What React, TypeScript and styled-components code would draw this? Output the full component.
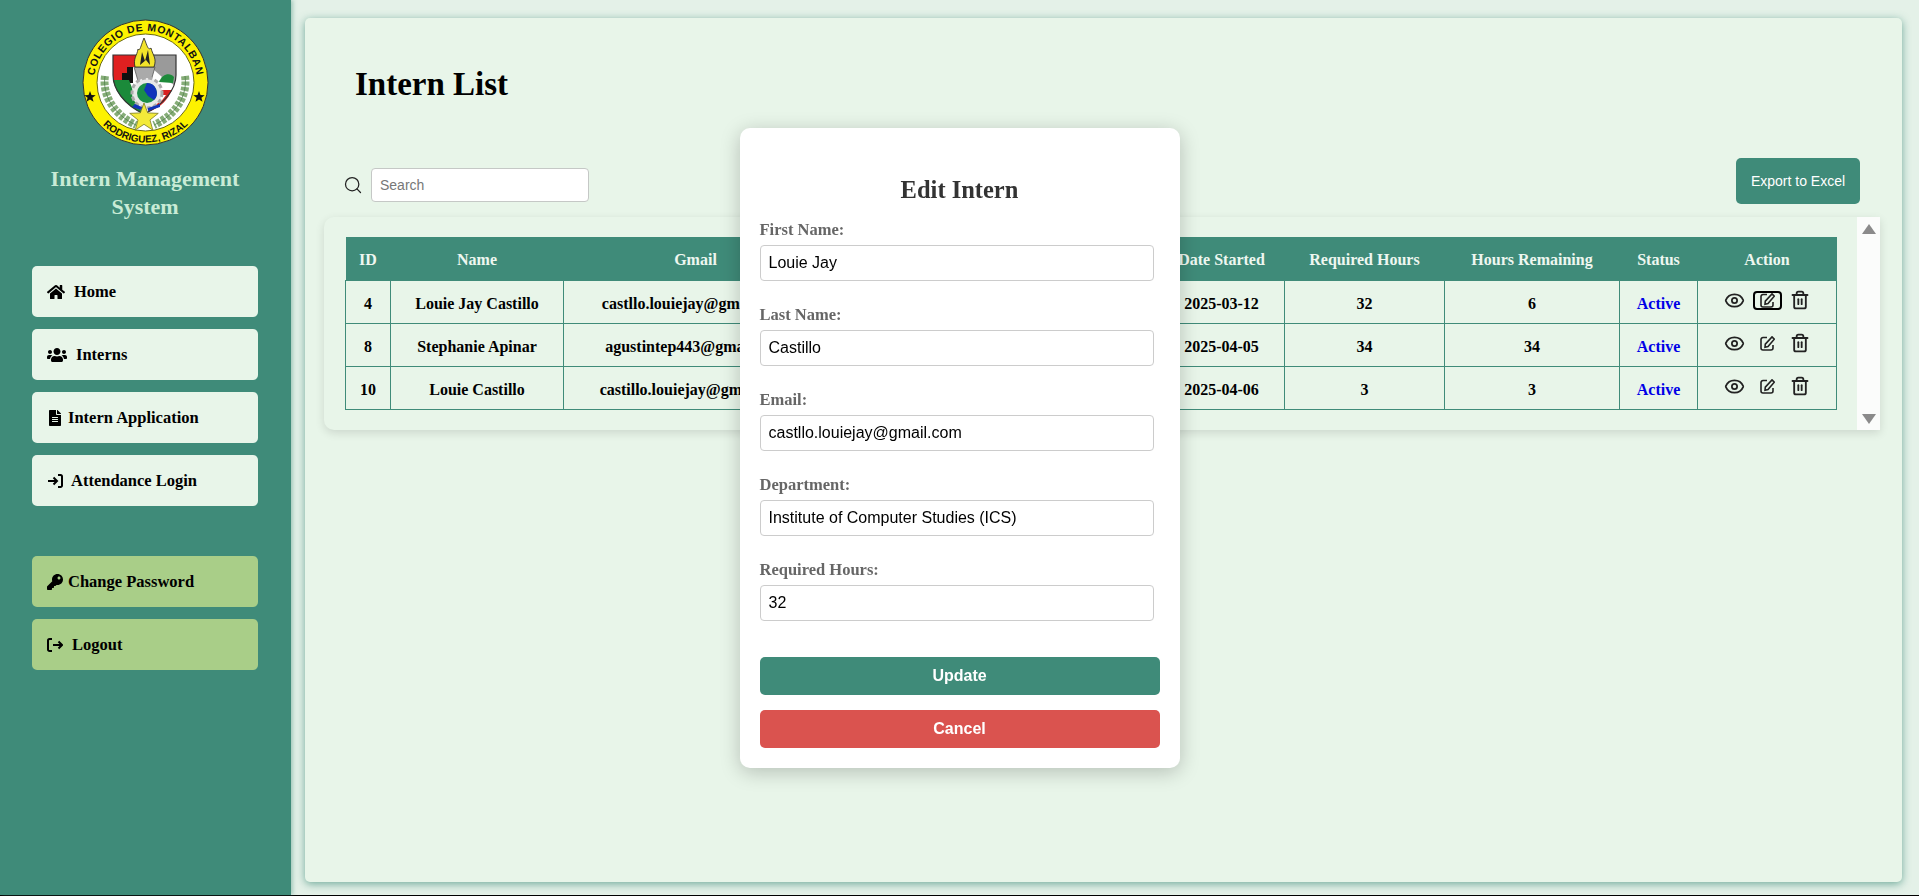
import React from "react";
import styled, { createGlobalStyle } from "styled-components";
import { FaHome, FaUsers, FaFileAlt, FaKey } from "react-icons/fa";
import { LuSearch, LuEye, LuTrash2 } from "react-icons/lu";

const GlobalStyle = createGlobalStyle`
  * {
    box-sizing: border-box;
  }
  html,
  body {
    margin: 0;
    height: 100%;
    overflow: hidden;
  }
  body {
    background: #e4f1e8;
    font-family: "Liberation Serif", serif;
  }
`;

const Layout = styled.div`
  display: flex;
  height: 896px;
  border-bottom: 1px solid #000;
`;

// 왼쪽 메뉴
const Sidebar = styled.aside`
  width: 291px;
  flex-shrink: 0;
  background: #3f8b79;
  box-shadow: 2px 0 4px rgba(63, 139, 121, 0.4);
  padding: 19px 33px 0 32px;
  display: flex;
  flex-direction: column;
`;

const LogoWrap = styled.div`
  display: flex;
  justify-content: center;
  height: 127px;
`;

const AppTitle = styled.h2`
  margin: 19px 10px 0;
  text-align: center;
  color: #c9ebd6;
  font-size: 22px;
  font-weight: 700;
  line-height: 28px;
`;

const Nav = styled.nav`
  margin-top: 45px;
  display: flex;
  flex-direction: column;
  gap: 12px;
`;

const BottomNav = styled(Nav)`
  margin-top: 50px;
`;

const NavButton = styled.button<{ $gap: number; $accent?: boolean }>`
  height: 51px;
  border: none;
  border-radius: 5px;
  padding: 0 15px;
  display: flex;
  align-items: center;
  gap: ${(p) => p.$gap}px;
  background: ${(p) => (p.$accent ? "#a9ce88" : "#e8f5e9")};
  color: #000;
  font-family: "Liberation Serif", serif;
  font-size: 16.5px;
  font-weight: 700;
  svg {
    flex-shrink: 0;
  }
`;

const Main = styled.main`
  flex: 1;
  min-width: 0;
  padding: 18px 17px 13px 14px;
  display: flex;
`;

const Panel = styled.section`
  flex: 1;
  min-width: 0;
  background: #e8f5e9;
  border-radius: 5px;
  box-shadow: 0 2px 8px rgba(63, 139, 121, 0.7);
  padding: 41px 22px 0 19px;
`;

const PageTitle = styled.h1`
  margin: 0 0 0 31px;
  color: #000;
  font-size: 33px;
  font-weight: 700;
  line-height: 50px;
`;

const Toolbar = styled.div`
  margin-top: 49px;
  height: 46px;
  padding: 0 20px 0 19px;
  display: flex;
  justify-content: space-between;
`;

const SearchBox = styled.div`
  display: flex;
  align-items: center;
  gap: 8px;
  padding-top: 7px;
  color: #222;
`;

const SearchInput = styled.input`
  width: 218px;
  height: 34px;
  padding: 0 8px;
  border: 1px solid #c5c8c6;
  border-radius: 4px;
  background: #fff;
  font-family: "Liberation Sans", sans-serif;
  font-size: 14px;
  &::placeholder {
    color: #777;
  }
`;

const ExportButton = styled.button`
  width: 124px;
  height: 46px;
  border: none;
  border-radius: 5px;
  background: #3f8b79;
  color: #fff;
  font-family: "Liberation Sans", sans-serif;
  font-size: 14px;
`;

const TableCard = styled.div`
  margin-top: 13px;
  height: 213px;
  background: #e8f5e9;
  border-radius: 10px 0 0 10px;
  box-shadow: 0 3px 10px rgba(0, 0, 0, 0.12);
  padding-left: 21px;
  display: flex;
  justify-content: space-between;
`;

const TableWrap = styled.div`
  width: 1491px;
  padding-top: 20px;
`;

const Table = styled.table`
  width: 1491px;
  height: 172px;
  table-layout: fixed;
  border-collapse: collapse;
  font-size: 16px;
  th {
    height: 43px;
    background: #3f8b79;
    color: #eef7f0;
    font-weight: 700;
    text-align: center;
    padding: 4px 0 0;
  }
  td {
    height: 43px;
    border: 1px solid #3f8b79;
    color: #000;
    font-weight: 700;
    text-align: center;
    padding: 4px 0 0;
    white-space: nowrap;
    overflow: hidden;
  }
`;

const StatusText = styled.span`
  color: #0000e6;
`;

const ActionRow = styled.div`
  display: flex;
  align-items: center;
  justify-content: center;
  gap: 8px;
  color: #222;
  margin-top: -7px;
`;

const EditButton = styled.span<{ $focused?: boolean }>`
  width: 29px;
  height: 19px;
  display: flex;
  align-items: center;
  justify-content: center;
  border-radius: 4px;
  border: 2px solid ${(p) => (p.$focused ? "#000" : "transparent")};
`;

const ScrollTrack = styled.div`
  width: 23px;
  background: #fbfcfb;
  display: flex;
  flex-direction: column;
  justify-content: space-between;
  align-items: center;
  padding: 7px 0 6px;
`;

const Overlay = styled.div`
  position: fixed;
  inset: 0;
  display: flex;
  align-items: center;
  justify-content: center;
`;

const Modal = styled.form`
  width: 440px;
  height: 640px;
  padding: 48px 20px 20px;
  background: #fff;
  border-radius: 10px;
  box-shadow: 0 4px 20px rgba(0, 0, 0, 0.22);
`;

const ModalTitle = styled.h3`
  margin: 0 0 11px;
  text-align: center;
  color: #333;
  font-size: 24.5px;
  font-weight: 700;
  line-height: 28px;
`;

const Field = styled.label`
  display: block;
  margin-bottom: 19px;
  color: #666;
  font-size: 16.5px;
  font-weight: 700;
  line-height: 30px;
`;

const FieldInput = styled.input`
  display: block;
  width: 394px;
  height: 36px;
  padding: 0 8px;
  border: 1px solid #ccc;
  border-radius: 4px;
  background: #fff;
  color: #000;
  font-family: "Liberation Sans", sans-serif;
  font-size: 16px;
`;

const ModalButton = styled.button<{ $danger?: boolean }>`
  display: block;
  width: 400px;
  height: 38px;
  border: none;
  border-radius: 5px;
  background: ${(p) => (p.$danger ? "#da534f" : "#3f8b79")};
  color: #fff;
  font-family: "Liberation Sans", sans-serif;
  font-size: 16px;
  font-weight: 700;
  margin-top: ${(p) => (p.$danger ? 15 : 36)}px;
`;

const Triangle = ({ down }: { down?: boolean }) => (
  <svg width="14" height="10" viewBox="0 0 14 10">
    <path d={down ? "M0 0H14L7 10Z" : "M7 0L14 10H0Z"} fill="#8a8a8a" />
  </svg>
);

const LoginIcon = () => (
  <svg width="16" height="16" viewBox="0 0 16 16" fill="none" stroke="#000" strokeWidth="2">
    <path d="M1 8H10M6.500 4.500L10 8L6.500 11.500" />
    <path d="M11 2H13.500A1.500 1.500 0 0 1 15 3.500V12.500A1.500 1.500 0 0 1 13.500 14H11" />
  </svg>
);

const LogoutIcon = () => (
  <svg width="16" height="16" viewBox="0 0 16 16" fill="none" stroke="#000" strokeWidth="2">
    <path d="M6 8H15M11.500 4.500L15 8L11.500 11.500" />
    <path d="M5 2H2.500A1.500 1.500 0 0 0 1 3.500V12.500A1.500 1.500 0 0 0 2.500 14H5" />
  </svg>
);

const EditIcon = () => (
  <svg width="15" height="15" viewBox="0 0 15 15" fill="none" stroke="#222" strokeWidth="1.600">
    <path d="M7 1.500H3A2 2 0 0 0 1 3.500V12A2 2 0 0 0 3 14H11A2 2 0 0 0 13 12V9" />
    <path d="M12 .9L14.300 3.200L8 10.500L5 11.200L5.300 8.200Z" />
  </svg>
);

const starPoints = (cx: number, cy: number, r: number) =>
  Array.from({ length: 10 }, (_, i) => {
    const radius = i % 2 === 0 ? r : r * 0.42;
    const angle = (Math.PI / 5) * i - Math.PI / 2;
    return `${cx + radius * Math.cos(angle)},${cy + radius * Math.sin(angle)}`;
  }).join(" ");

// 학교 로고
const Logo = () => (
  <svg width="127" height="127" viewBox="0 0 127 127">
    <defs>
      <path id="arcTop" d="M12 63.500A51.500 51.500 0 0 1 115 63.500" />
      <path id="arcBottom" d="M3.500 63.500A60 60 0 0 0 123.500 63.500" />
    </defs>
    <circle cx="63.500" cy="63.500" r="62.500" fill="#fdf200" stroke="#333" strokeWidth="1" />
    <circle cx="63.500" cy="63.500" r="48.500" fill="#fff" stroke="#6b6a10" strokeWidth="1" />
    <text fontFamily="Liberation Sans, sans-serif" fontSize="10.500" fontWeight="700" fill="#111" letterSpacing="0.6">
      <textPath href="#arcTop" startOffset="50%" textAnchor="middle">
        COLEGIO DE MONTALBAN
      </textPath>
    </text>
    <text fontFamily="Liberation Sans, sans-serif" fontSize="10" fontWeight="700" fill="#111">
      <textPath href="#arcBottom" startOffset="50%" textAnchor="middle">
        RODRIGUEZ, RIZAL
      </textPath>
    </text>
    <polygon points={starPoints(8, 78, 6)} fill="#111" />
    <polygon points={starPoints(117, 78, 6)} fill="#111" />

    <path d="M31 36H94V56C94 70 82 86 62 95C42 86 31 70 31 56Z" fill="#fff" />
    <path d="M31 36H56V48H51V61H31Z" fill="#e02020" />
    <path d="M40 54H45V48H51V64H40ZM45 54V59" fill="#111" />
    <path d="M31 61H47L58 90L62 95C46 88 34 76 31 61Z" fill="#1b8a3a" />
    <path d="M71 36H94V56C94 60 93 63 92 66L80 58L71 50Z" fill="#9a9a9a" />
    <path d="M77 63C80 55 88 53 92 58L91 64Z" fill="#1d8a3a" />
    <path d="M74 71H90C86 80 80 88 66 93Z" fill="#d92020" />
    <path d="M76 76H84L78 84H73Z" fill="#fff" />
    <path d="M31 36H94V56C94 70 82 86 62 95C42 86 31 70 31 56Z" fill="none" stroke="#333" strokeWidth="1.200" />

    <path d="M52 48H73L69 62H56Z" fill="#aaa" stroke="#555" strokeWidth="0.800" />
    <path d="M53 48C51 39 55 37 56 30C58 33 59 26 62 19C65 26 66 32 69 29C71 37 75 39 72 48Z" fill="#f2e32a" stroke="#222" strokeWidth="0.800" />
    <path d="M58 46L60 33L63 42L66 31L68 46L64 41Z" fill="#222" />

    <circle cx="65" cy="74" r="15" fill="#e8e8e8" stroke="#aaa" strokeWidth="3" strokeDasharray="4 2.500" />
    <circle cx="65" cy="74" r="10" fill="#1a8f48" />
    <path d="M65 64A10 10 0 0 1 72 81L66 77L62 71Z" fill="#1133bb" />
    <path d="M53 85L62 89V92L50 88ZM78 85L66 89V92L78 88Z" fill="#1133bb" />

    <g fill="none">
      <path d="M23 57C20 76 32 96 54 106" stroke="#86ad78" strokeWidth="8" strokeDasharray="4 1.500" />
      <path d="M103 57C106 76 94 96 72 106" stroke="#86ad78" strokeWidth="8" strokeDasharray="4 1.500" />
      <path d="M23 57C20 76 32 96 54 106M103 57C106 76 94 96 72 106" stroke="#4f7f4a" strokeWidth="0.800" />
    </g>
    <polygon points={starPoints(62, 99, 15)} fill="#f3ea3a" stroke="#7a7a20" strokeWidth="0.800" />
  </svg>
);

const navTop = [
  { label: "Home", icon: <FaHome size={18} />, gap: 9 },
  { label: "Interns", icon: <FaUsers size={20} />, gap: 9 },
  { label: "Intern Application", icon: <FaFileAlt size={16} />, gap: 5 },
  { label: "Attendance Login", icon: <LoginIcon />, gap: 8 },
];

const navBottom = [
  { label: "Change Password", icon: <FaKey size={16} />, gap: 5 },
  { label: "Logout", icon: <LogoutIcon />, gap: 9 },
];

const interns = [
  { id: 4, name: "Louie Jay Castillo", gmail: "castllo.louiejay@gmail.com", department: "ICS", date: "2025-03-12", required: 32, remaining: 6 },
  { id: 8, name: "Stephanie Apinar", gmail: "agustintep443@gmail.com", department: "ICS", date: "2025-04-05", required: 34, remaining: 34 },
  { id: 10, name: "Louie Castillo", gmail: "castillo.louiejay@gmail.com", department: "ICS", date: "2025-04-06", required: 3, remaining: 3 },
];

const fields = [
  { label: "First Name:", value: "Louie Jay" },
  { label: "Last Name:", value: "Castillo" },
  { label: "Email:", value: "castllo.louiejay@gmail.com" },
  { label: "Department:", value: "Institute of Computer Studies (ICS)" },
  { label: "Required Hours:", value: "32" },
];

const columnWidths = [45, 173, 264, 331, 126, 160, 175, 78, 139];

export default function App() {
  return (
    <>
      <GlobalStyle />
      <Layout>
        <Sidebar>
          <LogoWrap>
            <Logo />
          </LogoWrap>
          <AppTitle>Intern Management System</AppTitle>
          <Nav>
            {navTop.map((item) => (
              <NavButton key={item.label} $gap={item.gap}>
                {item.icon}
                {item.label}
              </NavButton>
            ))}
          </Nav>
          <BottomNav>
            {navBottom.map((item) => (
              <NavButton key={item.label} $gap={item.gap} $accent>
                {item.icon}
                {item.label}
              </NavButton>
            ))}
          </BottomNav>
        </Sidebar>
        <Main>
          <Panel>
            <PageTitle>Intern List</PageTitle>
            <Toolbar>
              <SearchBox>
                <LuSearch size={20} strokeWidth={1.5} />
                <SearchInput placeholder="Search" />
              </SearchBox>
              <ExportButton>Export to Excel</ExportButton>
            </Toolbar>
            <TableCard>
              <TableWrap>
                <Table>
                  <colgroup>
                    {columnWidths.map((w, i) => (
                      <col key={i} width={w} />
                    ))}
                  </colgroup>
                  <thead>
                    <tr>
                      <th>ID</th>
                      <th>Name</th>
                      <th>Gmail</th>
                      <th>Department</th>
                      <th>Date Started</th>
                      <th>Required Hours</th>
                      <th>Hours Remaining</th>
                      <th>Status</th>
                      <th>Action</th>
                    </tr>
                  </thead>
                  <tbody>
                    {interns.map((row, i) => (
                      <tr key={row.id}>
                        <td>{row.id}</td>
                        <td>{row.name}</td>
                        <td>{row.gmail}</td>
                        <td>{row.department}</td>
                        <td>{row.date}</td>
                        <td>{row.required}</td>
                        <td>{row.remaining}</td>
                        <td>
                          <StatusText>Active</StatusText>
                        </td>
                        <td>
                          <ActionRow>
                            <LuEye size={21} />
                            <EditButton $focused={i === 0}>
                              <EditIcon />
                            </EditButton>
                            <LuTrash2 size={20} strokeWidth={2.2} />
                          </ActionRow>
                        </td>
                      </tr>
                    ))}
                  </tbody>
                </Table>
              </TableWrap>
              <ScrollTrack>
                <Triangle />
                <Triangle down />
              </ScrollTrack>
            </TableCard>
          </Panel>
        </Main>
      </Layout>
      <Overlay>
        <Modal>
          <ModalTitle>Edit Intern</ModalTitle>
          {fields.map((field) => (
            <Field key={field.label}>
              {field.label}
              <FieldInput defaultValue={field.value} />
            </Field>
          ))}
          <ModalButton type="button">Update</ModalButton>
          <ModalButton type="button" $danger>
            Cancel
          </ModalButton>
        </Modal>
      </Overlay>
    </>
  );
}
